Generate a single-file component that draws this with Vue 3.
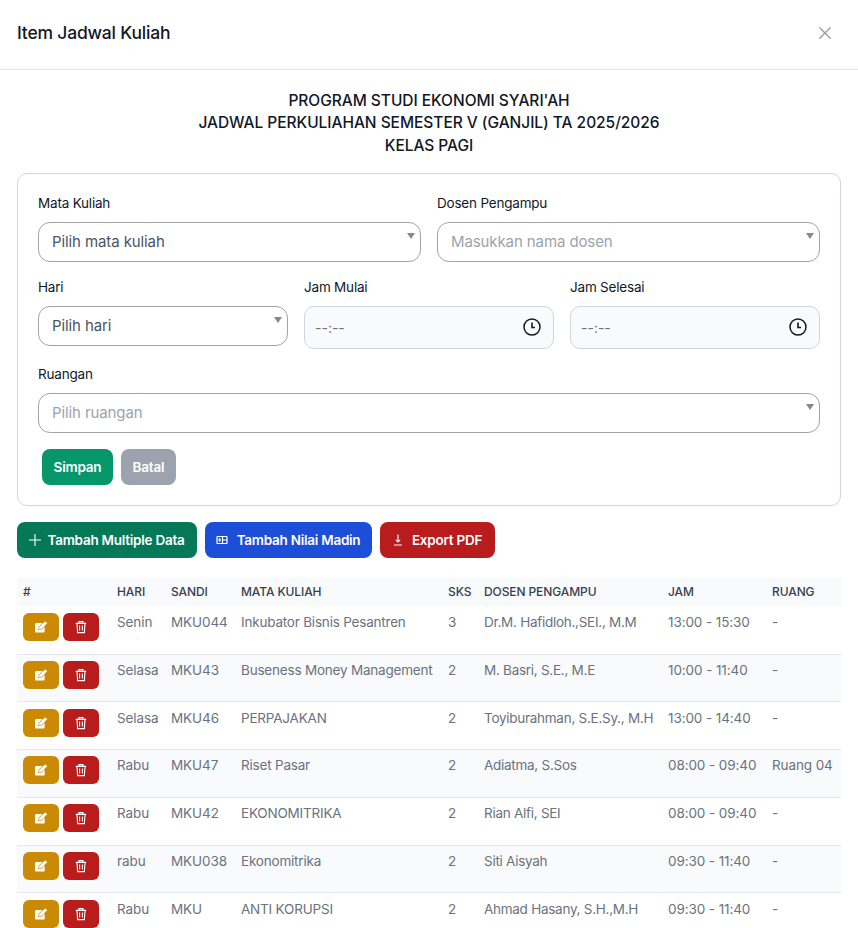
<script setup>
const rows = [
  ['Senin', 'MKU044', 'Inkubator Bisnis Pesantren', '3', 'Dr.M. Hafidloh.,SEI., M.M', '13:00 - 15:30', '-'],
  ['Selasa', 'MKU43', 'Buseness Money Management', '2', 'M. Basri, S.E., M.E', '10:00 - 11:40', '-'],
  ['Selasa', 'MKU46', 'PERPAJAKAN', '2', 'Toyiburahman, S.E.Sy., M.H', '13:00 - 14:40', '-'],
  ['Rabu', 'MKU47', 'Riset Pasar', '2', 'Adiatma, S.Sos', '08:00 - 09:40', 'Ruang 04'],
  ['Rabu', 'MKU42', 'EKONOMITRIKA', '2', 'Rian Alfi, SEI', '08:00 - 09:40', '-'],
  ['rabu', 'MKU038', 'Ekonomitrika', '2', 'Siti Aisyah', '09:30 - 11:40', '-'],
  ['Rabu', 'MKU', 'ANTI KORUPSI', '2', 'Ahmad Hasany, S.H.,M.H', '09:30 - 11:40', '-']
]
const heads = ['#', 'Hari', 'Sandi', 'Mata Kuliah', 'SKS', 'Dosen Pengampu', 'Jam', 'Ruang']
const widths = [94, 54, 70, 207, 36, 184, 104, 75]
</script>

<template>
  <div class="page">
    <header class="top">
      <h2>Item Jadwal Kuliah</h2>
      <svg class="close" viewBox="0 0 24 24" fill="none" stroke="#9ca3af" stroke-width="2" stroke-linecap="round"><path d="M5 5l14 14M19 5L5 19"/></svg>
    </header>
    <main class="body">
      <div class="heading">
        <div>PROGRAM STUDI EKONOMI SYARI'AH</div>
        <div>JADWAL PERKULIAHAN SEMESTER V (GANJIL) TA 2025/2026</div>
        <div>KELAS PAGI</div>
      </div>

      <section class="card">
        <div class="grid two">
          <div class="field">
            <label>Mata Kuliah</label>
            <div class="select"><span class="val">Pilih mata kuliah</span><i class="caret"></i></div>
          </div>
          <div class="field">
            <label>Dosen Pengampu</label>
            <div class="select"><span class="ph">Masukkan nama dosen</span><i class="caret"></i></div>
          </div>
        </div>
        <div class="grid three">
          <div class="field">
            <label>Hari</label>
            <div class="select"><span class="val">Pilih hari</span><i class="caret"></i></div>
          </div>
          <div class="field" v-for="t in ['Jam Mulai', 'Jam Selesai']" :key="t">
            <label>{{ t }}</label>
            <div class="time">
              <span>--:--</span>
              <svg viewBox="0 0 20 20" fill="none" stroke="#111827" stroke-width="1.5"><circle cx="10" cy="10" r="8"/><path d="M10 5.5V10.5H13" stroke-width="1.6"/></svg>
            </div>
          </div>
        </div>
        <div class="field">
          <label>Ruangan</label>
          <div class="select"><span class="ph">Pilih ruangan</span><i class="caret"></i></div>
        </div>
        <div class="form-btns">
          <button class="fbtn simpan">Simpan</button>
          <button class="fbtn batal">Batal</button>
        </div>
      </section>

      <div class="actions">
        <button class="act green">
          <svg width="14" height="14" viewBox="0 0 14 14" fill="none" stroke="#fff" stroke-width="1.1"><path d="M7 1v12M1 7h12"/></svg>
          Tambah Multiple Data
        </button>
        <button class="act blue">
          <svg width="14" height="14" viewBox="0 0 14 14" fill="none" stroke="#fff" stroke-width="1.2"><rect x="2" y="3.5" width="10" height="7" rx=".6"/><path d="M7.5 3.5v7M7.5 7H12"/><rect x="3.6" y="5.4" width="2" height="3" fill="#fff" stroke="none"/></svg>
          Tambah Nilai Madin
        </button>
        <button class="act red">
          <svg width="14" height="14" viewBox="0 0 14 14" fill="none" stroke="#fff" stroke-width="1.1"><path d="M7 1.5v7.5M4.8 6.8L7 9l2.2-2.2M3 12h8"/></svg>
          Export PDF
        </button>
      </div>

      <table>
        <colgroup><col v-for="w in widths" :key="w" :style="{ width: w + 'px' }"></colgroup>
        <thead>
          <tr><th v-for="h in heads" :key="h">{{ h }}</th></tr>
        </thead>
        <tbody>
          <tr v-for="(r, i) in rows" :key="i">
            <td class="ops">
              <div class="ops-in">
                <button class="mini edit">
                  <svg width="14" height="14" viewBox="0 0 14 14"><rect x="1" y="3" width="9.6" height="9.6" rx="1.2" fill="#fff"/><path d="M4.8 9.4l.5-2.4 5.9-5.8 2 2-5.9 5.7z" fill="#fff" stroke="#ca8a04" stroke-width="1.2" paint-order="stroke"/></svg>
                </button>
                <button class="mini del">
                  <svg width="14" height="14" viewBox="0 0 14 14" fill="none" stroke="#fff" stroke-width="1.1"><path d="M1.8 3.4h10.4M5 3.2V1.6h4v1.6M3 3.4l.6 9.2h6.8l.6-9.2M5.6 5.4v5.2M8.4 5.4v5.2"/></svg>
                </button>
              </div>
            </td>
            <td v-for="(c, j) in r" :key="j">{{ c }}</td>
          </tr>
        </tbody>
      </table>
    </main>
  </div>
</template>

<style>
html, body { margin: 0; background: #fff; overflow: hidden; }
</style>

<style scoped>
.page {
  width: 858px;
  height: 928px;
  overflow: hidden;
  background: #fff;
  font-family: Inter, "Liberation Sans", sans-serif;
  color: #111827;
}
.top {
  height: 69px;
  border-bottom: 1px solid #e5e7eb;
  display: flex;
  align-items: center;
  justify-content: space-between;
  padding: 0 24px 0 17px;
}
.top h2 {
  margin: 0 0 4px;
  font-size: 17.5px;
  font-weight: 500;
  letter-spacing: -0.2px;
}
.close { width: 18px; height: 18px; margin-bottom: 4px; }
.body { padding: 19.5px 17px 0; }
.heading {
  text-align: center;
  font-size: 15.5px;
  line-height: 22.5px;
  font-weight: 500;
  letter-spacing: -0.04px;
  margin-bottom: 15.5px;
}
.card {
  box-sizing: border-box;
  height: 333px;
  border: 1px solid #d1d5db;
  border-radius: 10px;
  padding: 19px 20px 20px;
}
.grid { display: grid; gap: 16px; margin-bottom: 15px; }
.two { grid-template-columns: 1fr 1fr; }
.three { grid-template-columns: 1fr 1fr 1fr; }
.field label {
  display: block;
  font-size: 13.5px;
  line-height: 20px;
  margin-bottom: 9px;
  letter-spacing: -0.2px;
  color: #111827;
}
.select {
  box-sizing: border-box;
  position: relative;
  height: 40px;
  border: 1px solid #a3a3a3;
  border-radius: 12px;
  padding: 0 13px;
  display: flex;
  align-items: center;
  font-size: 15px;
  letter-spacing: -0.1px;
}
.val { color: #4b5563; }
.ph { color: #9ca3af; }
.caret {
  position: absolute;
  right: 5px;
  top: 10px;
  width: 0;
  height: 0;
  border-left: 4px solid transparent;
  border-right: 4px solid transparent;
  border-top: 6px solid #888;
}
.time {
  box-sizing: border-box;
  height: 43px;
  background: #f9fafb;
  border: 1px solid #d1d5db;
  border-radius: 10px;
  padding: 0 11px 0 10px;
  display: flex;
  align-items: center;
  justify-content: space-between;
  font-size: 14px;
  color: #6b7280;
}
.time svg { width: 20px; height: 20px; margin-top: -1px; }
.form-btns { display: flex; gap: 8px; padding: 16px 4px 0; }
.fbtn {
  height: 36px;
  border: 0;
  border-radius: 8px;
  color: #fff;
  font: 600 13.5px Inter, sans-serif;
  letter-spacing: -0.2px;
  padding: 0;
}
.simpan { width: 71px; background: #059669; }
.batal { width: 55px; background: #9ca3af; }
.actions { display: flex; gap: 8px; margin-top: 16px; }
.act {
  height: 36px;
  border: 0;
  border-radius: 8px;
  color: #fff;
  font: 600 13.5px Inter, sans-serif;
  letter-spacing: -0.25px;
  display: flex;
  align-items: center;
  justify-content: center;
  gap: 6px;
  padding: 0 2px 0 0;
}
.green { width: 180px; background: #047857; }
.blue { width: 167px; background: #1d4ed8; gap: 8px; }
.red { width: 115px; background: #b91c1c; gap: 7px; }
table {
  width: 824px;
  table-layout: fixed;
  border-collapse: collapse;
  margin-top: 20px;
}
thead tr { background: #f9fafb; }
th {
  height: 28.75px;
  padding: 0 6px 0.75px;
  box-sizing: border-box;
  text-align: left;
  font-size: 12px;
  font-weight: 500;
  text-transform: uppercase;
  color: #374151;
  letter-spacing: -0.1px;
  white-space: nowrap;
}
td {
  padding: 5.25px 6px 6px;
  height: 47.75px;
  box-sizing: border-box;
  vertical-align: top;
  font-size: 13.5px;
  line-height: 20px;
  color: #6b7280;
  letter-spacing: -0.1px;
  white-space: nowrap;
  border-bottom: 1px solid #e5e7eb;
}
td:nth-child(4) { letter-spacing: -0.2px; }
td:nth-child(6) { letter-spacing: -0.27px; }
tbody tr:nth-child(even) { background: #f9fafb; }
td.ops { padding-top: 6.25px; }
.ops-in { display: flex; gap: 4px; }
.mini {
  width: 36px;
  height: 28px;
  border: 0;
  border-radius: 6px;
  padding: 0;
  display: flex;
  align-items: center;
  justify-content: center;
}
.edit { background: #ca8a04; }
.del { background: #b91c1c; }
</style>
